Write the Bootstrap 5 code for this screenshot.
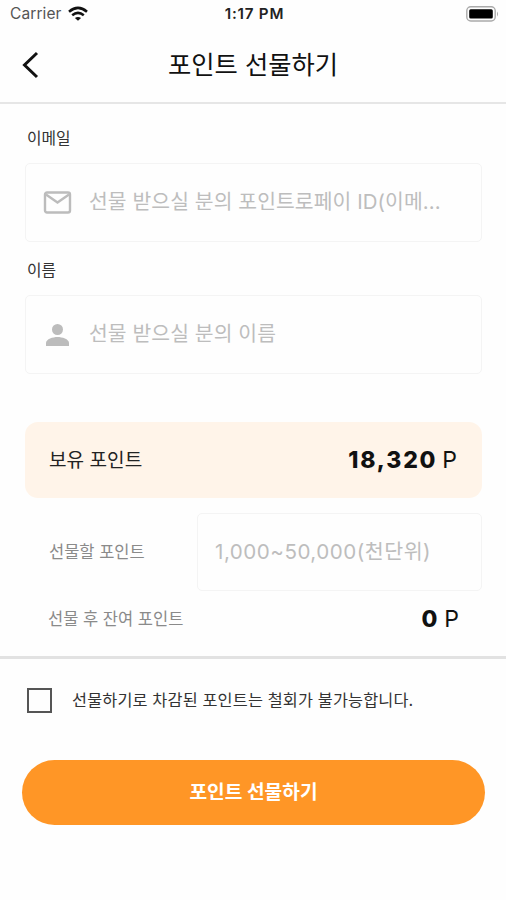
<!DOCTYPE html>
<html lang="ko">
<head>
<meta charset="utf-8">
<meta name="viewport" content="width=device-width, initial-scale=1">
<title>포인트 선물하기</title>
<link href="https://cdn.jsdelivr.net/npm/bootstrap@5.3.0/dist/css/bootstrap.min.css" rel="stylesheet">
<style>
body { font-family: Inter, "Noto Sans CJK KR", sans-serif; color: #222; background: #fefefe; }
.screen { height: 900px; }
.status { height: 28px; padding: 0 7px 0 10px; line-height: 28px; }
.status .carrier { font-size: 15.5px; color: #555; letter-spacing: .1px; line-height: 30px; }
.status .clock { font-size: 15.2px; font-weight: 600; letter-spacing: .75px; color: #222; line-height: 30px; }
.status > * { flex: 1 1 0; }
.wifi { margin-left: 6px; }
.topbar { height: 76px; border-bottom: 2px solid #e6e6e6; padding: 0 22px; }
.topbar h1 { font-size: 25.3px; font-weight: 400; color: #111; line-height: 36px; }
.side { width: 18px; }
.content { padding: 0 24px 0 25px; }
.field-name { font-size: 15.8px; line-height: 20px; padding-left: 2px; margin: 19px 0 14px; color: #333; }
.first-name { margin-top: 25px; }
.field-box { height: 79px; border: 1px solid #f4f4f4; border-radius: 5px; font-size: 20.4px; letter-spacing: .08px; color: #bdbdbd; padding: 0 17px; }
.field-box svg { flex: none; margin-right: 17px; }
.balance { height: 76px; margin-top: 48px; background: #fff4e9; border-radius: 13px; padding: 0 25px 0 24px; }
.balance-name { font-size: 19.1px; }
.points { font-size: 23px; color: #111; }
.points b { font-weight: 800; letter-spacing: 1.8px; margin-right: -1.5px; }
.amount-row { margin-top: 15px; }
.amount-box { width: 285px; height: 78px; font-size: 20.6px; letter-spacing: .5px; }
.muted-name { color: #8a8a8a; font-size: 16.5px; }
.rest { height: 65px; padding: 0 23px 9px; }
.rule { height: 3px; background: #e2e2e2; }
.agree { padding: 1px 27px 0; height: 82px; }
.tick { width: 25px; height: 25px; border: 2px solid #555; margin-right: 20px; flex: none; }
.agree-text { font-size: 16.3px; letter-spacing: .15px; color: #333; }
.send { height: 65px; margin: 19px 21px 0 22px; background: #ff9626; color: #fff; font-size: 19.2px; font-weight: 700; }
.send:hover { background: #f58a18; color: #fff; }
</style>
</head>
<body>
<div class="screen d-flex flex-column text-nowrap overflow-hidden">
  <div class="status d-flex align-items-center">
    <div class="d-flex align-items-center">
      <span class="carrier">Carrier</span>
      <svg class="wifi" width="20" height="16" viewBox="0 0 20 16" fill="none" stroke="#111" stroke-width="2.5"><path d="M1 5.700Q10-2 19 5.700M4.200 9.300q5.800-4.800 11.600 0"/><path d="M10 14.800 6.900 12.100q3.100-2.200 6.200 0z" fill="#111" stroke="none"/></svg>
    </div>
    <div class="clock text-center">1:17 PM</div>
    <div class="d-flex justify-content-end">
      <svg width="33" height="16" viewBox="0 0 33 16"><rect x=".8" y=".8" width="28.4" height="14.2" rx="4" fill="none" stroke="#aaa" stroke-width="1.4"/><rect x="3.2" y="3.2" width="23.6" height="9.4" rx="1.5" fill="#000"/><path d="M31 5.500q2 2.500 0 5z" fill="#aaa"/></svg>
    </div>
  </div>
  <header class="topbar d-flex align-items-center justify-content-between">
    <svg class="side" width="18" height="28" viewBox="0 0 18 28" fill="none" stroke="#111" stroke-width="3"><path d="M15 2 2.500 14 15 26"/></svg>
    <h1 class="m-0">포인트 선물하기</h1>
    <span class="side"></span>
  </header>
  <main class="content">
    <div class="field-name first-name">이메일</div>
    <div class="field-box d-flex align-items-center">
      <svg width="29" height="24" viewBox="0 0 29 24" fill="none" stroke="#bcbcbc" stroke-width="2.4"><rect x="2" y="1.500" width="25" height="20" rx="2"/><path d="m3 3.500 11.500 8L26 3.500"/></svg>
      <span>선물 받으실 분의 포인트로페이 ID(이메...</span>
    </div>
    <div class="field-name">이름</div>
    <div class="field-box d-flex align-items-center">
      <svg width="29" height="24" viewBox="0 0 29 24" fill="#bcbcbc"><circle cx="14.500" cy="6.500" r="5.500"/><path d="M3 23v-3c0-4 7-6 11.500-6S26 16 26 20v3z"/></svg>
      <span>선물 받으실 분의 이름</span>
    </div>
    <section class="balance d-flex align-items-center justify-content-between">
      <span class="balance-name">보유 포인트</span>
      <span class="points"><b>18,320</b> P</span>
    </section>
    <div class="amount-row d-flex align-items-center justify-content-between ps-4">
      <span class="muted-name">선물할 포인트</span>
      <div class="amount-box field-box d-flex align-items-center">1,000~50,000(천단위)</div>
    </div>
    <div class="rest d-flex align-items-center justify-content-between">
      <span class="muted-name">선물 후 잔여 포인트</span>
      <span class="points"><b>0</b> P</span>
    </div>
  </main>
  <div class="rule"></div>
  <label class="agree d-flex align-items-center">
    <span class="tick"></span>
    <span class="agree-text">선물하기로 차감된 포인트는 철회가 불가능합니다.</span>
  </label>
  <button class="send btn rounded-pill border-0" type="button">포인트 선물하기</button>
</div>
<script src="https://cdn.jsdelivr.net/npm/bootstrap@5.3.0/dist/js/bootstrap.bundle.min.js"></script>
</body>
</html>
